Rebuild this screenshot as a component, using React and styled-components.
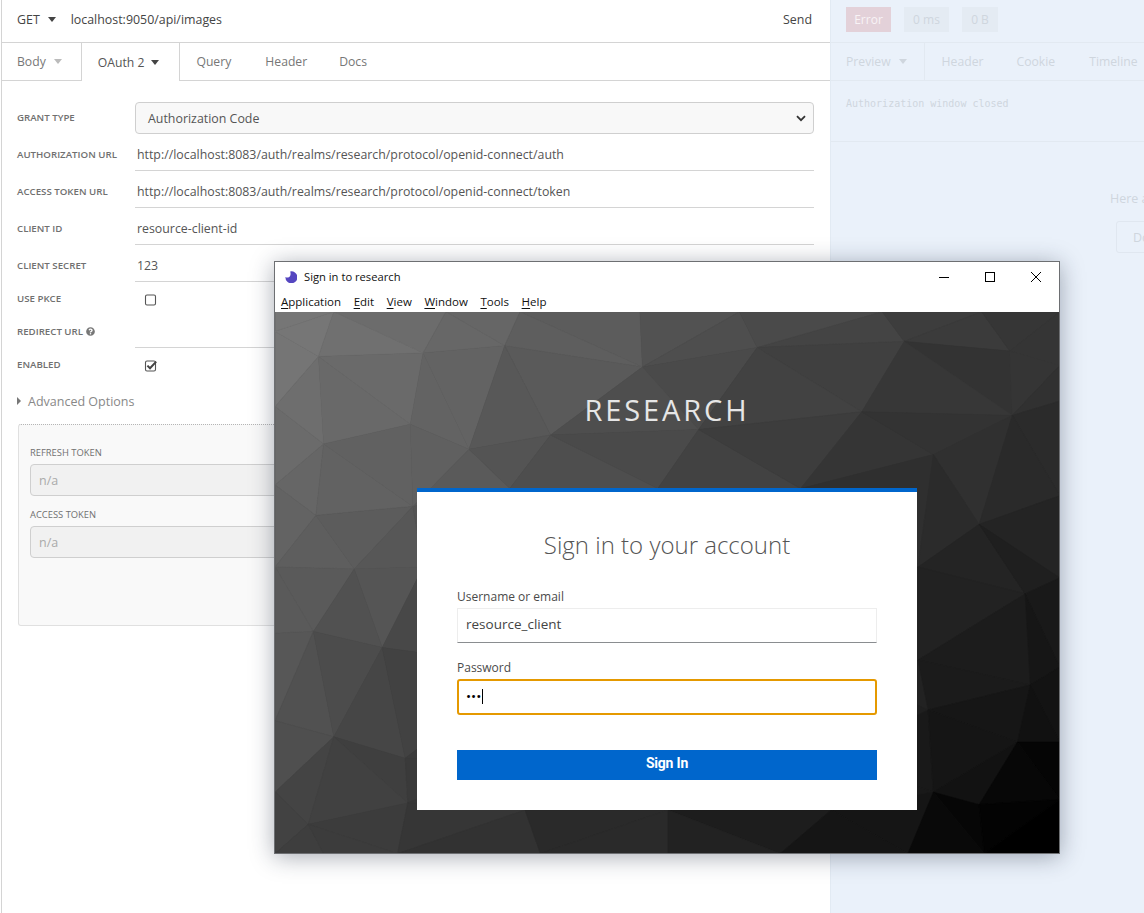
import React, { useMemo } from 'react';
import styled, { createGlobalStyle } from 'styled-components';
import { FaQuestionCircle } from 'react-icons/fa';

const GlobalStyle = createGlobalStyle`
    html, body { margin:0; padding:0; background:#fff; }
    * { box-sizing:border-box; }
    body { font-family:"Open Sans", "Liberation Sans", sans-serif; }
`;

const Page = styled.div`
    position:relative;
    display:flex;
    width:1144px;
    height:913px;
    overflow:hidden;
`;

/* request pane */
const RequestPane = styled.div`
    flex:none;
    width:829px;
    margin-left:1px;
    border-left:1px solid #d4d4d4;
    color:#555;
`;
const UrlBar = styled.div`
    display:flex;
    align-items:center;
    height:43px;
    padding:0 18px 3px 15px;
    border-bottom:1px solid #d4d4d4;
    font-size:12.4px;
    color:#444;
`;
const Caret = styled.span`
    display:inline-block;
    flex:none;
    width:0;
    height:0;
    margin-left:${p => p.$gap || 8}px;
    border-left:4px solid transparent;
    border-right:4px solid transparent;
    border-top:5px solid ${p => p.$color || '#444'};
`;
const UrlText = styled.span`
    flex:1;
    margin-left:15px;
`;
const TabBar = styled.div`
    display:flex;
    height:38px;
    border-bottom:1px solid ${p => p.$line || '#d4d4d4'};
    font-size:12.2px;
`;
const Tab = styled.div`
    display:flex;
    align-items:center;
    height:${p => (p.$active ? '38px' : '37px')};
    padding:0 ${p => p.$right || 0}px 0 ${p => p.$left || 0}px;
    color:${p => (p.$active ? '#555' : '#777')};
    ${p => p.$active && `
        background:#fff;
        border-left:1px solid #d4d4d4;
        border-right:1px solid #d4d4d4;
    `}
    ${p => p.$dim && `
        color:#cfd6de;
        white-space:nowrap;
    `}
    ${p => p.$divider && `
        border-right:1px solid #e2e9f1;
    `}
`;
const Form = styled.div`
    padding:21px 16px 0 15px;
`;
const Field = styled.div`
    display:grid;
    grid-template-columns:118px 1fr;
    align-items:center;
    height:${p => p.$height || 37}px;
    padding-top:${p => p.$top ?? 5}px;
`;
const Label = styled.div`
    display:flex;
    align-items:center;
    gap:3px;
    padding-bottom:1px;
    font-size:9.7px;
    font-weight:600;
    color:#707070;
    white-space:nowrap;
    svg { font-size:9px; color:#777; }
`;
const SelectBox = styled.div`
    display:flex;
    align-items:center;
    justify-content:space-between;
    height:32px;
    padding:0 7px 0 12px;
    background:#f8f8f8;
    border:1px solid #cfcfcf;
    border-radius:4px;
    font-size:12.4px;
    color:#555;
`;
const FieldValue = styled.div`
    height:100%;
    padding:0 2px;
    display:flex;
    align-items:center;
    border-bottom:1px solid #d4d4d4;
    font-size:12.35px;
    color:#555;
`;
const CheckCell = styled.div`
    display:flex;
    padding:2px 0 0 9px;
`;
const AdvancedRow = styled.div`
    display:flex;
    align-items:center;
    height:38px;
    font-size:12.5px;
    color:#888;
`;
const SideCaret = styled.span`
    width:0;
    height:0;
    margin:0 7px 0 0;
    border-top:4px solid transparent;
    border-bottom:4px solid transparent;
    border-left:4.5px solid #777;
`;
const TokenBox = styled.div`
    height:202px;
    margin:4px 0 0 1px;
    padding:20px 11px 0;
    background:#f9f9f9;
    border:1px solid #e0e0e0;
    border-top:1px dotted #b5b5b5;
    border-radius:3px;
`;
const TokenLabel = styled.div`
    height:16px;
    margin-bottom:3px;
    line-height:16px;
    font-size:9.4px;
    color:#707070;
`;
const TokenInput = styled.div`
    display:flex;
    align-items:center;
    height:32px;
    margin-bottom:11px;
    padding:1px 0 0 8px;
    background:#f1f1f1;
    border:1px solid #cfcfcf;
    border-radius:4px;
    font-size:12.5px;
    color:#aaa;
`;

/* response pane, dimmed */
const ResponsePane = styled.div`
    flex:1;
    min-width:0;
    overflow:hidden;
    background:#eaf1fa;
    border-left:1px solid #e2eaf3;
    color:#cfd6de;
`;
const StatusBar = styled.div`
    display:flex;
    gap:13px;
    height:43px;
    padding:7px 0 0 15px;
    border-bottom:1px solid #e2e9f1;
`;
const Chip = styled.div`
    display:flex;
    align-items:center;
    justify-content:center;
    width:${p => p.$width}px;
    height:25px;
    background:${p => (p.$error ? '#e3d1d9' : '#e4ebf3')};
    color:${p => (p.$error ? '#f8f3f6' : '#cfd6de')};
    font-size:12px;
`;
const LogArea = styled.div`
    height:61px;
    padding:16px 0 0 15px;
    border-bottom:1px solid #e2e9f1;
    font-family:"DejaVu Sans Mono", "Liberation Mono", monospace;
    font-size:10px;
    line-height:13px;
    color:#cfd6de;
`;
const EmptyHint = styled.div`
    margin:48px 0 0 279px;
    width:120px;
    font-size:12.5px;
    line-height:17px;
    white-space:nowrap;
`;
const GhostButton = styled.div`
    display:flex;
    align-items:center;
    width:80px;
    height:32px;
    margin:14px 0 0 285px;
    padding-left:16px;
    border:1px solid #e0e7f0;
    border-radius:3px;
    font-size:12.5px;
`;

/* floating auth window */
const Win = styled.div`
    position:absolute;
    left:274px;
    top:261px;
    width:786px;
    height:593px;
    display:flex;
    flex-direction:column;
    background:#fff;
    border:1px solid #6d6f72;
    box-shadow:0 3px 22px rgba(30,40,60,.38);
`;
const TitleBar = styled.div`
    display:flex;
    align-items:center;
    height:29px;
    padding:0 0 0 10px;
    font-size:11.2px;
    color:#111;
`;
const WinTitle = styled.span`
    flex:1;
    margin-left:7px;
`;
const WinControls = styled.div`
    display:flex;
    align-items:center;
    color:#000;
`;
const WinControl = styled.div`
    display:flex;
    align-items:center;
    justify-content:center;
    width:46px;
    height:29px;
`;
const MenuBar = styled.div`
    display:flex;
    gap:12.6px;
    height:21px;
    padding:1px 0 0 6px;
    font-size:11.5px;
    line-height:19px;
    color:#111;
    u { text-underline-offset:2px; }
`;
const Backdrop = styled.div`
    position:relative;
    flex:1;
    overflow:hidden;
    display:flex;
    flex-direction:column;
    align-items:center;
    background:#333;
`;
const Mesh = styled.svg`
    position:absolute;
    inset:0;
    width:100%;
    height:100%;
`;
const Realm = styled.div`
    position:relative;
    margin-top:76px;
    height:44px;
    line-height:44px;
    font-size:29px;
    letter-spacing:2.9px;
    color:#e6e6e6;
`;
const Card = styled.div`
    position:relative;
    width:500px;
    height:322px;
    margin-top:56px;
    padding:0 40px;
    background:#fff;
    border-top:4px solid #06c;
`;
const CardTitle = styled.h1`
    margin:33px 0 0;
    height:40px;
    line-height:40px;
    text-align:center;
    font-size:24px;
    font-weight:300;
    color:#555;
`;
const FieldLabel = styled.div`
    margin-top:${p => p.$top}px;
    height:16px;
    line-height:16px;
    font-size:12px;
    color:#4a4a4a;
`;
const LoginInput = styled.div`
    display:flex;
    align-items:center;
    height:${p => (p.$focus ? 36 : 35)}px;
    margin-top:3px;
    padding:0 0 3px 8px;
    font-size:13.5px;
    color:#444;
    border:1px solid #ededed;
    border-bottom-color:#8a8d90;
    ${p => p.$focus && `
        padding:0 0 2px 7px;
        border:2px solid #e59900;
        border-radius:3px;
        color:#000;
    `}
`;
const Cursor = styled.span`
    width:1px;
    height:15px;
    margin-left:1px;
    background:#000;
`;
const Submit = styled.div`
    display:flex;
    align-items:center;
    justify-content:center;
    height:30px;
    margin-top:35px;
    padding-bottom:4px;
    background:#06c;
    color:#fff;
    font-family:Roboto, "Liberation Sans", sans-serif;
    font-size:14px;
    font-weight:700;
    letter-spacing:-0.2px;
`;

// vertices read off the reference, in a stretched zoom of the window
const GRID = [
    [[10,5],[125,5],[345,5],[490,5],[725,5],[920,5],[1200,5],[1395,5],[1548,5]],
    [[10,60],[95,130],[300,120],[460,100],[730,160],[955,105],[1243,88],[1450,115],[1548,155]],
    [[10,270],[105,375],[275,320],[390,390],[550,350],[840,335],[1160,285],[1455,295],[1548,255]],
    [[10,490],[90,575],[280,550],[470,500],[760,500],[1040,500],[1300,405],[1390,600],[1548,520]],
    [[10,720],[165,725],[300,720],[500,720],[780,720],[1100,720],[1270,720],[1480,795],[1548,750]],
    [[10,905],[85,900],[220,945],[500,1000],[780,1000],[1100,1000],[1270,980],[1490,1050],[1548,1000]],
    [[10,1150],[125,1195],[265,1255],[500,1250],[780,1250],[1100,1250],[1290,1120],[1465,1210],[1548,1210]],
    [[10,1350],[75,1440],[270,1380],[500,1400],[780,1400],[1100,1400],[1300,1350],[1390,1385],[1548,1370]],
    [[10,1522],[105,1522],[250,1522],[530,1522],[780,1522],[1000,1522],[1250,1522],[1400,1522],[1548,1522]],
];

const dist = (a, b) => Math.hypot(a[0] - b[0], a[1] - b[1]);

function buildMesh() {
    const W = 784;
    const H = 541;
    const pt = ([x, y]) => [(x / 1.96) - 5, (y / 2.8) - 2];
    const tris = [];
    GRID.forEach((row, r) => {
        if (r === GRID.length - 1) return;
        row.forEach((v, c) => {
            if (c === row.length - 1) return;
            const a = pt(v);
            const b = pt(row[c + 1]);
            const d = pt(GRID[r + 1][c]);
            const e = pt(GRID[r + 1][c + 1]);
            // split each quad along its short diagonal, no slivers
            if (dist(a, e) < dist(b, d)) {
                tris.push([a, b, e], [a, e, d]);
            } else {
                tris.push([a, b, d], [b, e, d]);
            }
        });
    });
    return tris.map((t, i) => {
        const cx = (t[0][0] + t[1][0] + t[2][0]) / 3;
        const cy = (t[0][1] + t[1][1] + t[2][1]) / 3;
        const u = Math.min(Math.max(cx / W, 0), 1);
        const v = Math.min(Math.max(cy / H, 0), 1);
        const noise = (Math.sin(i * 12.9898) * 43758.5453) % 1;
        const grey = Math.round(Math.max(0, 120 * (1 - (0.56 * u + 0.44 * v)) - (u * v > 0.8 ? 6 : 0) + noise * 3.5));
        return {
            points: t.map(p => p.map(n => n.toFixed(1)).join(',')).join(' '),
            fill: `rgb(${grey},${grey},${grey})`,
        };
    });
}

function CheckBox({ checked }) {
    return (
        <svg width="14" height="14" viewBox="0 0 14 14">
            <rect x="1.5" y="2" width="10" height="10" rx="1.5" fill="#fff" stroke="#555" strokeWidth="1.1" />
            {checked && <path d="M3.4 6.6 L6 9.2 L12.2 2.6" fill="none" stroke="#444" strokeWidth="2" />}
        </svg>
    );
}

function App() {
    const tris = useMemo(buildMesh, []);
    return (
        <Page>
            <GlobalStyle />
            <RequestPane>
                <UrlBar>
                    GET<Caret $gap={8} />
                    <UrlText>localhost:9050/api/images</UrlText>
                    Send
                </UrlBar>
                <TabBar>
                    <Tab $left={15} $right={19}>Body<Caret $gap={8} $color="#bbb" /></Tab>
                    <Tab $active $left={16} $right={20}>OAuth 2<Caret $gap={7} /></Tab>
                    <Tab $left={16} $right={17}>Query</Tab>
                    <Tab $left={17} $right={16}>Header</Tab>
                    <Tab $left={16}>Docs</Tab>
                </TabBar>
                <Form>
                    <Field $height={32} $top={0}>
                        <Label>GRANT TYPE</Label>
                        <SelectBox>
                            Authorization Code
                            <svg width="10" height="7" viewBox="0 0 10 7">
                                <path d="M1 1.2 L5 5.2 L9 1.2" fill="none" stroke="#333" strokeWidth="1.8" />
                            </svg>
                        </SelectBox>
                    </Field>
                    <Field>
                        <Label>AUTHORIZATION URL</Label>
                        <FieldValue>http://localhost:8083/auth/realms/research/protocol/openid-connect/auth</FieldValue>
                    </Field>
                    <Field>
                        <Label>ACCESS TOKEN URL</Label>
                        <FieldValue>http://localhost:8083/auth/realms/research/protocol/openid-connect/token</FieldValue>
                    </Field>
                    <Field>
                        <Label>CLIENT ID</Label>
                        <FieldValue>resource-client-id</FieldValue>
                    </Field>
                    <Field>
                        <Label>CLIENT SECRET</Label>
                        <FieldValue>123</FieldValue>
                    </Field>
                    <Field $height={33} $top={0}>
                        <Label>USE PKCE</Label>
                        <CheckCell><CheckBox /></CheckCell>
                    </Field>
                    <Field $height={33} $top={0}>
                        <Label>REDIRECT URL <FaQuestionCircle /></Label>
                        <FieldValue />
                    </Field>
                    <Field $height={34} $top={0}>
                        <Label>ENABLED</Label>
                        <CheckCell><CheckBox checked /></CheckCell>
                    </Field>
                    <AdvancedRow><SideCaret />Advanced Options</AdvancedRow>
                    <TokenBox>
                        <TokenLabel>REFRESH TOKEN</TokenLabel>
                        <TokenInput>n/a</TokenInput>
                        <TokenLabel>ACCESS TOKEN</TokenLabel>
                        <TokenInput>n/a</TokenInput>
                    </TokenBox>
                </Form>
            </RequestPane>

            <ResponsePane>
                <StatusBar>
                    <Chip $error $width={45}>Error</Chip>
                    <Chip $width={45}>0 ms</Chip>
                    <Chip $width={36}>0 B</Chip>
                </StatusBar>
                <TabBar $line="#e2e9f1">
                    <Tab $dim $divider $left={15} $right={17}>
                        Preview<Caret $gap={8} $color="#cfd6de" />
                    </Tab>
                    <Tab $dim $left={17} $right={16}>Header</Tab>
                    <Tab $dim $left={17} $right={18}>Cookie</Tab>
                    <Tab $dim $left={16}>Timeline</Tab>
                </TabBar>
                <LogArea>Authorization window closed</LogArea>
                <EmptyHint>Here are some</EmptyHint>
                <GhostButton>Do</GhostButton>
            </ResponsePane>

            <Win>
                <TitleBar>
                    <svg width="12" height="12" viewBox="0 0 12 12">
                        <path d="M5.2 0.4 A6 6 0 1 1 0.4 6 C2 7 4 6.6 5 5.2 C5.8 4 5.7 2 5.2 0.4 Z" fill="#5546c0" />
                    </svg>
                    <WinTitle>Sign in to research</WinTitle>
                    <WinControls>
                        <WinControl>
                            <svg width="10" height="10" viewBox="0 0 10 10"><path d="M0 5.5 H10" stroke="#000" strokeWidth="1" /></svg>
                        </WinControl>
                        <WinControl>
                            <svg width="10" height="10" viewBox="0 0 10 10"><rect x="0.5" y="0.5" width="9" height="9" fill="none" stroke="#000" strokeWidth="1" /></svg>
                        </WinControl>
                        <WinControl>
                            <svg width="10" height="10" viewBox="0 0 10 10"><path d="M0 0 L10 10 M10 0 L0 10" stroke="#000" strokeWidth="1" /></svg>
                        </WinControl>
                    </WinControls>
                </TitleBar>
                <MenuBar>
                    <span><u>A</u>pplication</span>
                    <span><u>E</u>dit</span>
                    <span><u>V</u>iew</span>
                    <span><u>W</u>indow</span>
                    <span><u>T</u>ools</span>
                    <span><u>H</u>elp</span>
                </MenuBar>
                <Backdrop>
                    <Mesh viewBox="0 0 784 541" preserveAspectRatio="none">
                        {tris.map((t, i) => (
                            <polygon key={i} points={t.points} fill={t.fill} stroke={t.fill} strokeWidth="0.6" />
                        ))}
                    </Mesh>
                    <Realm>RESEARCH</Realm>
                    <Card>
                        <CardTitle>Sign in to your account</CardTitle>
                        <FieldLabel $top={24}>Username or email</FieldLabel>
                        <LoginInput>resource_client</LoginInput>
                        <FieldLabel $top={17}>Password</FieldLabel>
                        <LoginInput $focus>•••<Cursor /></LoginInput>
                        <Submit>Sign In</Submit>
                    </Card>
                </Backdrop>
            </Win>
        </Page>
    );
}

export default App;
